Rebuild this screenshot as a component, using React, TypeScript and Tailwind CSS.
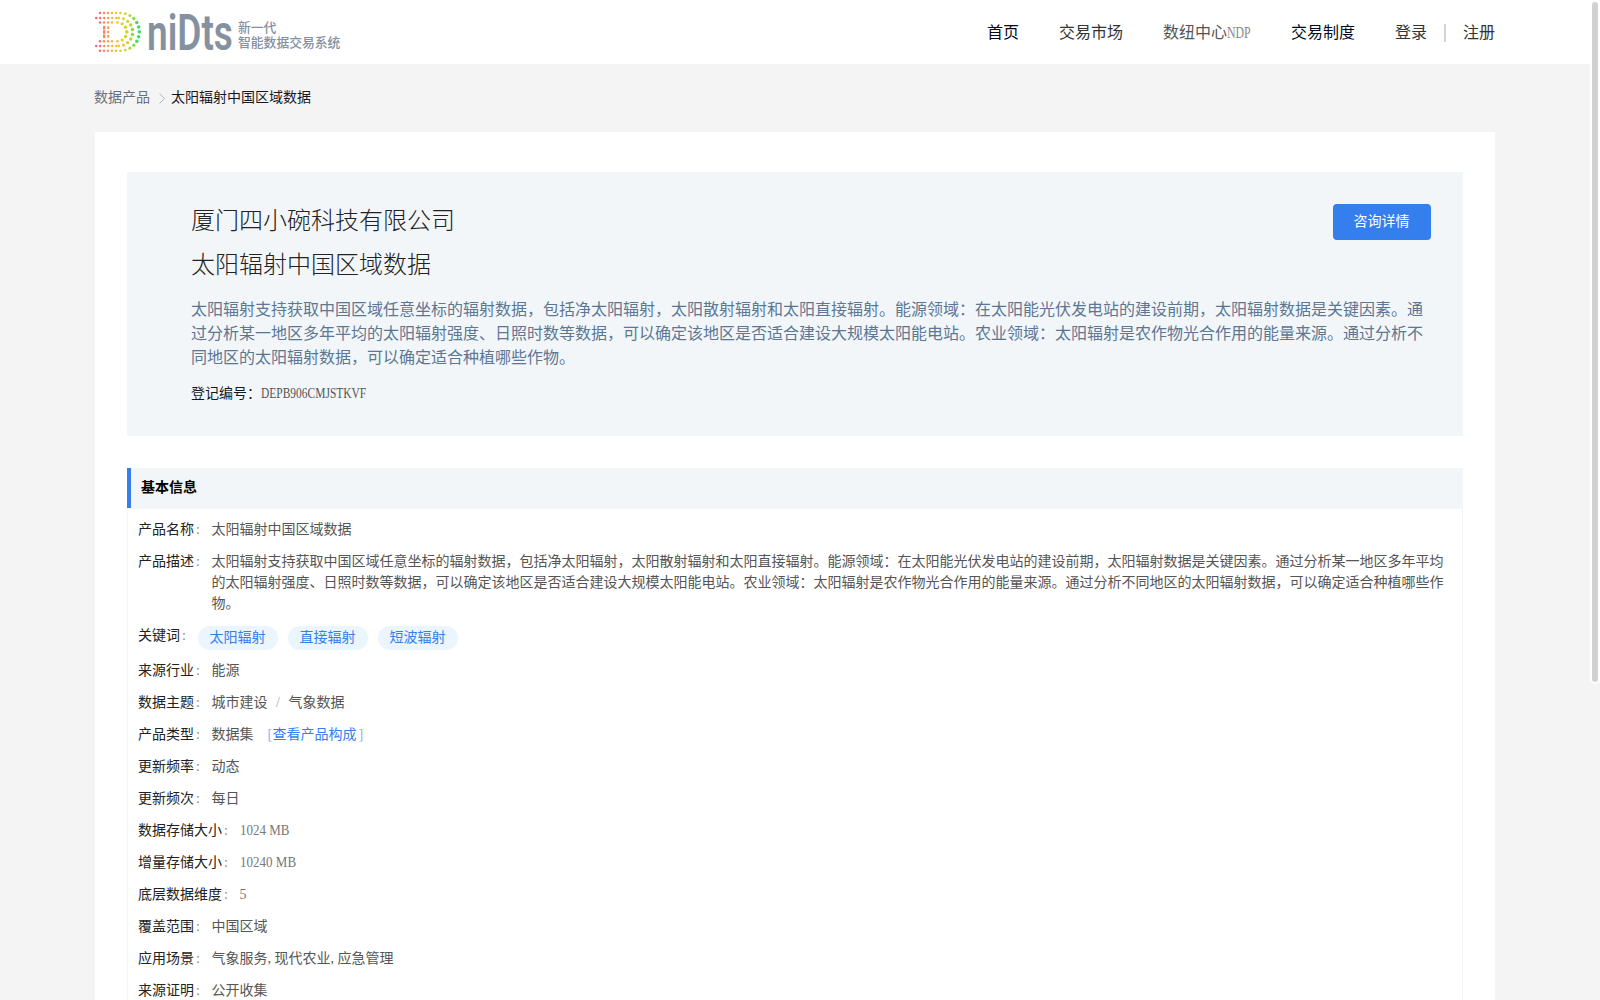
import type { ReactNode } from "react";

const DESC =
  "太阳辐射支持获取中国区域任意坐标的辐射数据，包括净太阳辐射，太阳散射辐射和太阳直接辐射。能源领域：在太阳能光伏发电站的建设前期，太阳辐射数据是关键因素。通过分析某一地区多年平均的太阳辐射强度、日照时数等数据，可以确定该地区是否适合建设大规模太阳能电站。农业领域：太阳辐射是农作物光合作用的能量来源。通过分析不同地区的太阳辐射数据，可以确定适合种植哪些作物。";

const DOT_COLORS = [
  "#fb5a8a", "#fb6570", "#fb8550", "#fb9c48", "#f6b23c", "#eec42e",
  "#e2cf28", "#d4d52c", "#b4d838", "#86da48", "#3fdc68",
];

function dotColor(x: number) {
  return DOT_COLORS[Math.min(10, Math.floor(x / 4.1))];
}

// one dotted D outline: two straight rows closed by a half circle
function dotsFor(left: number, top: number, bottom: number, right: number) {
  const r = (bottom - top) / 2;
  const cx = right - r;
  const cy = top + r;
  const dots: number[][] = [];
  for (let x = left; x < cx - 2; x += 4) {
    dots.push([x, top, 1.2], [x, bottom, 1.2]);
  }
  const n = Math.round((Math.PI * r) / 4.8);
  for (let i = 0; i <= n; i++) {
    const a = -Math.PI / 2 + (Math.PI * i) / n;
    dots.push([cx + r * Math.cos(a), cy + r * Math.sin(a), 1.3 + 0.5 * Math.cos(a)]);
  }
  return dots;
}

function Logo() {
  const dots = [
    ...dotsFor(5, 5, 42.7, 44.3),
    ...dotsFor(1.2, 10, 38, 37.7),
    ...dotsFor(5, 14.5, 33.3, 31.8),
  ];
  return (
    <div className="flex h-16 items-center">
      <svg width="52" height="48" viewBox="0 0 52 48">
        {dots.map(([x, y, r], i) => (
          <circle key={i} cx={x} cy={y} r={r} fill={dotColor(x)} />
        ))}
        {[19.7, 24, 28.3].map((y) => (
          <g key={y}>
            <rect x="8" y={y - 1.8} width="2.4" height="3.6" fill="#fb8550" />
            <rect x="12" y={y - 1.2} width="2.2" height="2.4" fill="#fb9c48" />
          </g>
        ))}
      </svg>
      <div className="w-[91px]">
        <span className="inline-block origin-left translate-y-[1px] scale-x-[0.74] font-['Roboto',sans-serif] text-[50px] leading-[48px] font-semibold text-[#8590a0]">
          niDts
        </span>
      </div>
      <div className="flex flex-col pt-[7px] text-[12.8px] leading-[15px] font-medium text-[#8590a0]">
        <span>新一代</span>
        <span>智能数据交易系统</span>
      </div>
    </div>
  );
}

function Row({ label, children }: { label: string; children: ReactNode }) {
  return (
    <div className="flex gap-[10px] leading-[21px]">
      <div className="flex shrink-0 text-[#222]">
        {label}
        <span className="w-[7.5px] pl-[2px] text-[#888]">:</span>
      </div>
      <div className="text-[#555]">{children}</div>
    </div>
  );
}

function App() {
  return (
    <div className="relative h-[1000px] w-[1600px] overflow-hidden bg-[#f4f4f4] font-['Liberation_Serif','Noto_Sans_CJK_SC',sans-serif] text-sm">
      <header className="flex h-16 items-center justify-between bg-white pr-[105px] pl-[95px]">
        <Logo />
        <nav className="flex items-center gap-10 pt-px text-base text-[#333]">
          <a className="text-[#020b1a]">首页</a>
          <a>交易市场</a>
          <a className="flex text-[#555]">
            数纽中心
            <span className="w-6 text-[#888]">
              <span className="inline-block origin-left scale-x-[0.74]">NDP</span>
            </span>
          </a>
          <a className="text-[#020b1a]">交易制度</a>
          <div className="flex items-center">
            <a>登录</a>
            <span className="mr-[17px] ml-[17px] h-[18px] w-[2px] bg-[#d4d4d4]" />
            <a>注册</a>
          </div>
        </nav>
      </header>

      <main className="ml-[95px] w-[1400px]">
        <div className="flex h-[68px] items-center text-[#16181f]">
          <span className="-ml-px text-[#6b6f7b]">数据产品</span>
          <svg className="mr-[6px] ml-[9px]" width="6" height="11" viewBox="0 0 6 11" fill="none" stroke="#b4b6bb">
            <path d="M0.5 0.5L5.5 5.5L0.5 10.5" />
          </svg>
          <span>太阳辐射中国区域数据</span>
        </div>

        <div className="h-[900px] bg-white px-8 pt-10">
          <section className="relative h-[264px] bg-[#f2f6f9] pt-[27px] pr-8 pl-16">
            <h1 className="text-2xl leading-[44px] font-light text-[#222]">厦门四小碗科技有限公司</h1>
            <h2 className="text-2xl leading-[44px] font-light text-[#222]">太阳辐射中国区域数据</h2>
            <p className="mt-[11px] text-base leading-6 text-[#5d7693]">{DESC}</p>
            <div className="mt-[13px] flex leading-[21px] text-[#16181f]">
              登记编号：
              <span className="w-[105px] text-[#555]">
                <span className="inline-block origin-left scale-x-[0.82]">DEPB906CMJSTKVF</span>
              </span>
            </div>
            <button className="absolute top-8 right-8 h-9 w-[98px] rounded bg-[#357eee] pr-px text-white">咨询详情</button>
          </section>

          <section className="mt-8">
            <h3 className="flex h-[41px] bg-[#f2f6f9] leading-[40px] font-bold text-black">
              <span className="mr-[10px] h-10 w-1 bg-[#357eee]" />
              基本信息
            </h3>
            <div className="flex flex-col gap-[11px] border-x border-[#f2f4f7] px-[10px] pt-[10px] pb-6">
              <Row label="产品名称">太阳辐射中国区域数据</Row>
              <Row label="产品描述">
                <div className="w-[1236px]">{DESC}</div>
              </Row>
              <Row label="关键词">
                <div className="mt-px -mb-px flex gap-[10px]">
                  {["太阳辐射", "直接辐射", "短波辐射"].map((tag) => (
                    <span key={tag} className="h-6 rounded-full bg-[#ebf5fe] px-3 leading-6 text-[#357eee]">{tag}</span>
                  ))}
                </div>
              </Row>
              <Row label="来源行业">能源</Row>
              <Row label="数据主题">
                <div className="flex">
                  城市建设<span className="w-[21px] text-center text-[#aaa]">/</span>气象数据
                </div>
              </Row>
              <Row label="产品类型">
                <div className="flex">
                  数据集
                  <a className="ml-[14px] flex text-[#357eee]">
                    <span className="w-[5px] text-[#8ab4f5]">[</span>
                    查看产品构成
                    <span className="pl-[2px] text-[#8ab4f5]">]</span>
                  </a>
                </div>
              </Row>
              <Row label="更新频率">动态</Row>
              <Row label="更新频次">每日</Row>
              <Row label="数据存储大小">
                <span className="inline-block origin-left scale-x-[0.93] text-[#777]">1024 MB</span>
              </Row>
              <Row label="增量存储大小">
                <span className="inline-block origin-left scale-x-[0.93] text-[#777]">10240 MB</span>
              </Row>
              <Row label="底层数据维度">
                <span className="text-[#777]">5</span>
              </Row>
              <Row label="覆盖范围">中国区域</Row>
              <Row label="应用场景">
                <div className="flex">
                  气象服务<span className="w-[7px]">,</span>现代农业<span className="w-[7px]">,</span>应急管理
                </div>
              </Row>
              <Row label="来源证明">公开收集</Row>
            </div>
          </section>
        </div>
      </main>

      {/* scrollbar */}
      <div className="absolute top-0 right-0 h-[684px] w-[10px] rounded-b-full bg-white p-[2px]">
        <div className="h-full rounded-full bg-[#d1d1d1]" />
      </div>
    </div>
  );
}

export default App;
